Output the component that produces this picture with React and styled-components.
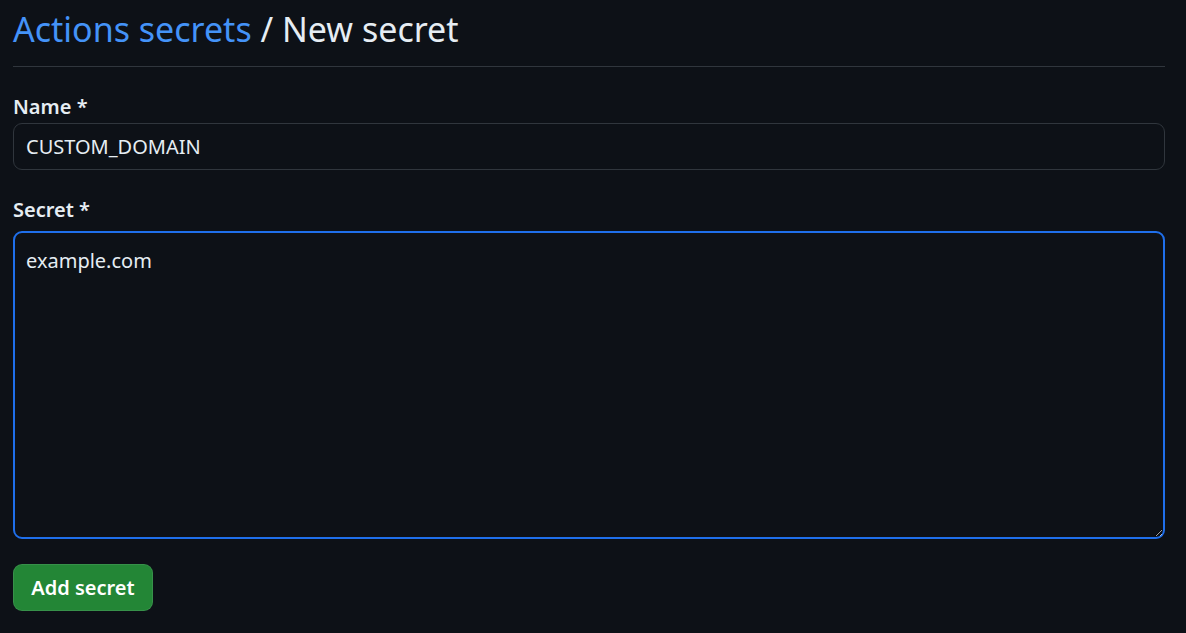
import React from "react";
import styled, { createGlobalStyle } from "styled-components";

const GlobalStyle = createGlobalStyle`
  html, body {
    margin: 0;
    padding: 0;
    background: #0d1117;
  }
  body {
    font-family: "Noto Sans", "Open Sans", sans-serif;
    color: #e6edf3;
  }
`;

const Page = styled.div`
  width: 1152px;
  padding: 0 21px 0 13px;
  min-height: 633px;
  box-sizing: content-box;
`;

const Subhead = styled.div`
  display: flex;
  align-items: center;
  height: 66px;
  border-bottom: 1px solid #30363d;
  margin-bottom: 26px;
`;

const Heading = styled.h2`
  margin: -8px 0 0;
  font-size: 34px;
  font-weight: 400;
  line-height: 58px;
  color: #e6edf3;
`;

const Crumb = styled.a`
  color: #4493f8;
  text-decoration: none;
`;

const Field = styled.div`
  display: flex;
  flex-direction: column;
  margin-bottom: ${(p) => p.$gap || "26px"};
`;

const Label = styled.label`
  font-size: 20px;
  font-weight: 600;
  line-height: 28px;
  margin-bottom: ${(p) => p.$space || "2px"};
  color: #e6edf3;
`;

const TextInput = styled.input`
  height: 47px;
  box-sizing: border-box;
  padding: 0 12px;
  background: #0d1117;
  border: 1px solid #30363d;
  border-radius: 9px;
  color: #e6edf3;
  font-family: inherit;
  font-size: 20px;
  outline: none;
`;

const TextArea = styled.textarea`
  height: 308px;
  box-sizing: border-box;
  padding: 13px 11px;
  background: #0d1117;
  border: 2px solid #1f6feb;
  border-radius: 9px;
  color: #e6edf3;
  font-family: inherit;
  font-size: 20px;
  line-height: 30px;
  outline: none;
  resize: vertical;
  color-scheme: dark;
`;

const Button = styled.button`
  width: 140px;
  height: 47px;
  background: #238636;
  border: 1px solid rgba(240, 246, 252, 0.1);
  border-radius: 9px;
  color: #ffffff;
  font-family: inherit;
  font-size: 20px;
  font-weight: 600;
  cursor: pointer;
`;

export default function App() {
  return (
    <>
      <GlobalStyle />
      <Page>
        <Subhead>
          <Heading>
            <Crumb href="#">Actions secrets</Crumb> / New secret
          </Heading>
        </Subhead>
        <Field>
          <Label>Name *</Label>
          <TextInput defaultValue="CUSTOM_DOMAIN" />
        </Field>
        <Field $gap="25px">
          <Label $space="7px">Secret *</Label>
          <TextArea defaultValue="example.com" />
        </Field>
        <Button>Add secret</Button>
      </Page>
    </>
  );
}
